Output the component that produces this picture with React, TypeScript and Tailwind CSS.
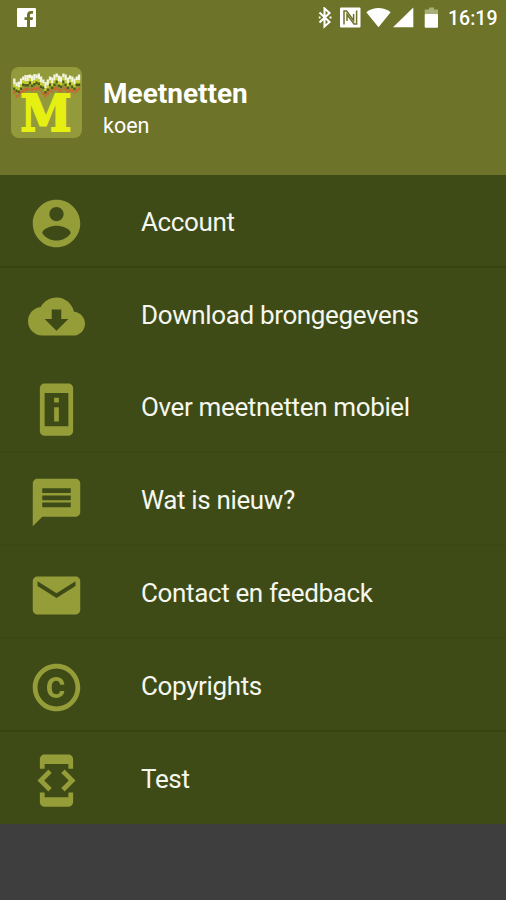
import { MdCopyright } from "react-icons/md";

const items = [
  { label: "Account", line: "border-[#37430f]", d: "M12 2C6.48 2 2 6.48 2 12s4.48 10 10 10 10-4.48 10-10S17.52 2 12 2zm0 3c1.66 0 3 1.34 3 3s-1.34 3-3 3-3-1.34-3-3 1.34-3 3-3zm0 14.2c-2.5 0-4.71-1.28-6-3.22.03-1.99 4-3.08 6-3.08 1.99 0 5.97 1.09 6 3.08-1.29 1.94-3.5 3.22-6 3.22z" },
  { label: "Download brongegevens", line: "border-[#3e4b17]", d: "M19.35 10.04C18.67 6.59 15.64 4 12 4 9.11 4 6.6 5.64 5.35 8.04 2.34 8.36 0 10.91 0 14c0 3.31 2.69 6 6 6h13c2.76 0 5-2.24 5-5 0-2.64-2.05-4.78-4.65-4.96zM17 13l-5 5-5-5h3V9h4v4h3z" },
  { label: "Over meetnetten mobiel", line: "border-[#3c4916]", d: "M13 7h-2v2h2V7zm0 4h-2v6h2v-6zm4-9.99L7 1c-1.1 0-2 .9-2 2v18c0 1.1.9 2 2 2h10c1.1 0 2-.9 2-2V3c0-1.1-.9-1.99-2-1.99zM17 19H7V5h10v14z" },
  { label: "Wat is nieuw?", line: "border-[#3c4916]", d: "M20 2H4c-1.1 0-1.99.9-1.99 2L2 22l4-4h14c1.1 0 2-.9 2-2V4c0-1.1-.9-2-2-2zm-2 12H6v-2h12v2zm0-3H6V9h12v2zm0-3H6V6h12v2z" },
  { label: "Contact en feedback", line: "border-[#3b4815]", d: "M20 4H4c-1.1 0-1.99.9-1.99 2L2 18c0 1.1.9 2 2 2h16c1.1 0 2-.9 2-2V6c0-1.1-.9-2-2-2zm0 4l-8 5-8-5V6l8 5 8-5v2z" },
  { label: "Copyrights", line: "border-[#37430f]", d: null },
  { label: "Test", line: "border-transparent", d: "M7 5h10v2h2V3c0-1.1-.9-1.99-2-1.99L7 1c-1.1 0-2 .9-2 2v4h2V5zm8.41 11.59L20 12l-4.59-4.59L14 8.83 17.17 12 14 15.17l1.41 1.42zM10 15.17L6.83 12 10 8.83 8.59 7.41 4 12l4.59 4.59L10 15.17zM17 19H7v-2H5v4c0 1.1.9 2 2 2h10c1.1 0 2-.9 2-2v-4h-2v2z" },
];

// Height of the pixel wave in the logo, one value per column.
const wave = [6, 10, 9, 6, 4, 2.5, 2.5, 2, 3, 1.5, 2, 1, 4, 7, 9.5, 7, 4, 5, 2, 1, 3, 4, 1, 2, 5, 3, 4, 6, 4, 2];

function Logo() {
  return (
    <svg className="h-[71px] w-[71px] overflow-visible" viewBox="0 0 71 71">
      <rect width="71" height="71" rx="8" fill="#929a3c" />
      {wave.map((y, i) => {
        const x = 2.2 + i * 2.23;
        const h = i % 3 === 1 ? 4 : 6;
        return (
          <g key={i}>
            <rect x={x} y={y + 5.5} width="2.3" height={h} fill="#f4f5df" />
            <rect x={x} y={y + 5.5 + h} width="2.3" height="3.2" fill="#c8d32b" />
            <rect x={x} y={y + 8.5 + h} width="2.3" height="2.6" fill="#515b18" />
            <rect x={x} y={y * 0.9 + 18.7} width="2.3" height="3" fill={i % 5 === 2 ? "#a5813a" : "#cd672f"} />
          </g>
        );
      })}
      <text x="35" y="63.6" textAnchor="middle" fontSize="49.5" fontWeight="700" fill="#e5ef12" stroke="#e5ef12" strokeWidth="2" fontFamily="'DejaVu Serif', serif" textLength="51" lengthAdjust="spacingAndGlyphs">M</text>
    </svg>
  );
}

function StatusBar() {
  return (
    <div className="flex h-9 items-center justify-between pr-2 pl-[17px]">
      <svg className="mb-px h-[19px] w-[19px]" viewBox="0 0 19 19">
        <rect width="19" height="19" rx="1" fill="#fff" />
        <path d="M10 19v-7H7.5V9.2H10V7.1C10 4.3 11.5 3 14 3h2v2.8h-1.5c-1.1 0-1.5.5-1.5 1.5v1.9h3l-.4 2.8H13v7z" fill="#6d7328" />
      </svg>
      <div className="flex items-center">
        <svg className="h-[22px] w-[120px]" viewBox="318 7 120 22">
          <path d="M319.5 12.5l10 9.5-5 4.5V8.5l5 4.5-10 9.5" fill="none" stroke="#fff" strokeWidth="2.1" />
          <path d="M318.8 17.5h1.8M329.5 17.5h2" stroke="#fff" strokeWidth="1.8" />
          <rect x="340" y="7.5" width="20.5" height="20" rx="1" fill="#fff" />
          <path d="M344 24.5V11h2.6l7 9.5V14M356.6 10.5V24H354l-7-9.5V21" fill="none" stroke="#6d7328" strokeWidth="1.5" />
          <path d="M378.5 27.3L366.3 12.2Q378.5 4 390.7 12.2z" fill="#fff" />
          <path d="M393 27.2h20.3V7.5z" fill="#fff" />
          <path d="M429 7.5h5v2h4v5h-13.3v-5h4.3z" fill="#a9ad78" />
          <rect x="424.7" y="14" width="13.3" height="13.7" rx="1" fill="#fff" />
        </svg>
        <span className="ml-2.5 w-[50px] pt-0.5 text-[19.5px] leading-none font-medium text-white">16:19</span>
      </div>
    </div>
  );
}

export default function App() {
  return (
    <main className="flex h-[900px] w-[506px] flex-col overflow-hidden bg-[#3e3e3e] font-[Roboto,sans-serif]">
      <header className="h-[175px] shrink-0 bg-[#6d7328]">
        <StatusBar />
        <div className="flex pt-[31px] pl-[11px]">
          <Logo />
          <div className="pt-[11px] pl-[21px] text-white">
            <h1 className="text-[28px] leading-8 font-bold">Meetnetten</h1>
            <p className="text-[21.5px] leading-8">koen</p>
          </div>
        </div>
      </header>
      <nav className="h-[649px] shrink-0 bg-[#3e4b17]">
        {items.map((item) => (
          <div key={item.label} className={`flex h-[92.8px] items-center border-b-2 pl-[28px] ${item.line}`}>
            <span className="mt-[7px] h-[57px] w-[57px] text-[#959d39]">
              {item.d ? (
                <svg className="h-[57px] w-[57px]" viewBox="0 0 24 24" fill="currentColor"><path d={item.d} /></svg>
              ) : (
                <MdCopyright className="h-[57px] w-[57px]" />
              )}
            </span>
            <span className="mt-[3px] ml-[56px] text-[26px] leading-8 tracking-[-0.36px] whitespace-nowrap text-[#f5f7ee]">{item.label}</span>
          </div>
        ))}
      </nav>
    </main>
  );
}
